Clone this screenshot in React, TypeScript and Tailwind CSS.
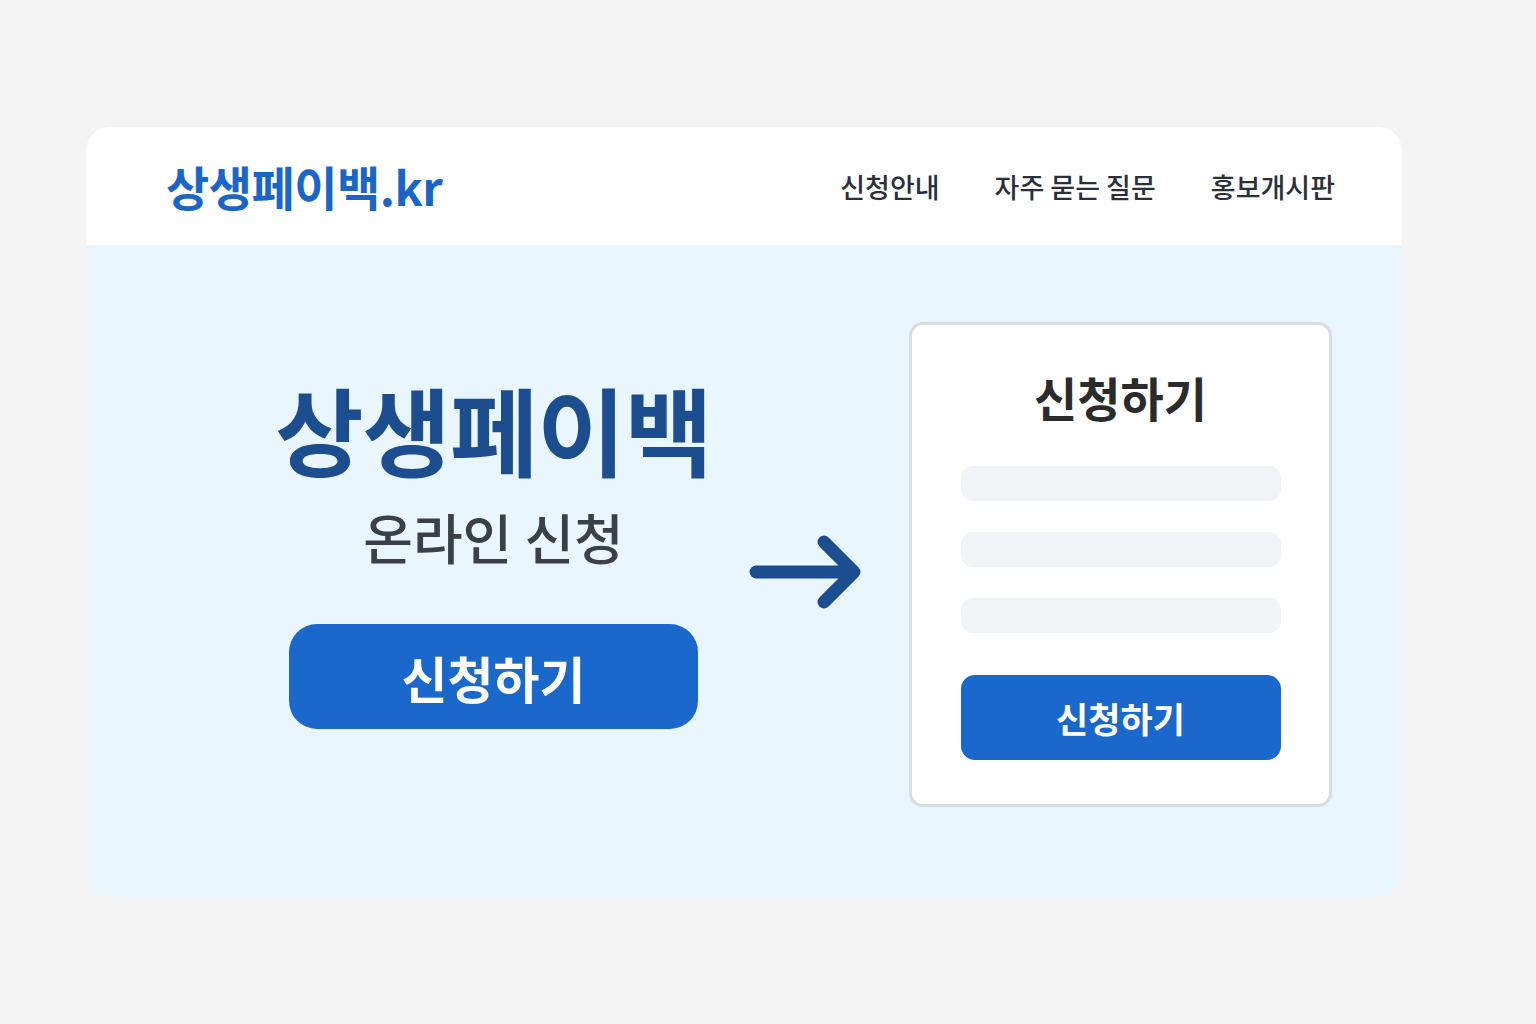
import React from "react";

const font = { fontFamily: '"Noto Sans CJK KR", "Noto Sans", sans-serif' };

export default function App() {
  return (
    <div className="min-h-[1024px] w-full bg-[#f3f3f3] pt-[127px]" style={font}>
      <div className="ml-[86px] w-[1316px] h-[770px] rounded-[24px] overflow-hidden bg-[#eaf6fe] flex flex-col">
        <header className="h-[118px] bg-white flex items-center justify-between pl-[80px] pr-[67px] shrink-0">
          <div className="text-[47px] font-bold text-[#1a66c8] tracking-[-0.5px] leading-none pb-[2px]">
            상생페이백.kr
          </div>
          <nav className="flex items-center gap-[55px] text-[27px] font-medium text-[#2a2f3a] leading-none">
            <span>신청안내</span>
            <span>자주 묻는 질문</span>
            <span>홍보개시판</span>
          </nav>
        </header>
        <main className="flex-1 flex items-start">
          <div className="ml-[203px] mt-[135px] w-[409px] flex flex-col items-center">
            <h1 className="text-[96px] font-bold leading-none text-[#1c4e8f] tracking-[-1px] whitespace-nowrap">상생페이백</h1>
            <p className="mt-[34px] text-[54px] font-medium leading-none text-[#3a3f4a] whitespace-nowrap">온라인 신청</p>
            <button className="mt-[60px] w-[409px] h-[105px] rounded-[28px] bg-[#1a68cb] text-white text-[50px] font-bold leading-none">
              신청하기
            </button>
          </div>
          <div className="ml-[51px] mt-[290px]">
            <svg width="114" height="74" viewBox="0 0 114 74" fill="none">
              <path d="M7 37 H104 M75 7 L105 37 L75 67" stroke="#1c4e8f" strokeWidth="13" strokeLinecap="round" strokeLinejoin="round" />
            </svg>
          </div>
          <div className="ml-[46px] mt-[77px] w-[423px] h-[485px] bg-white border-[3px] border-[#d6dde5] rounded-[14px] flex flex-col items-center">
            <h2 className="mt-[48px] text-[47px] font-bold leading-none text-[#2b2b2b]">신청하기</h2>
            <div className="mt-[46px] w-[320px] flex flex-col gap-[31px]">
              <div className="h-[35px] rounded-[12px] bg-[#f1f3f7]" />
              <div className="h-[35px] rounded-[12px] bg-[#f1f3f7]" />
              <div className="h-[35px] rounded-[12px] bg-[#f1f3f7]" />
            </div>
            <button className="mt-[42px] w-[320px] h-[85px] rounded-[14px] bg-[#1a68cb] text-white text-[35px] font-bold leading-none">
              신청하기
            </button>
          </div>
        </main>
      </div>
    </div>
  );
}
